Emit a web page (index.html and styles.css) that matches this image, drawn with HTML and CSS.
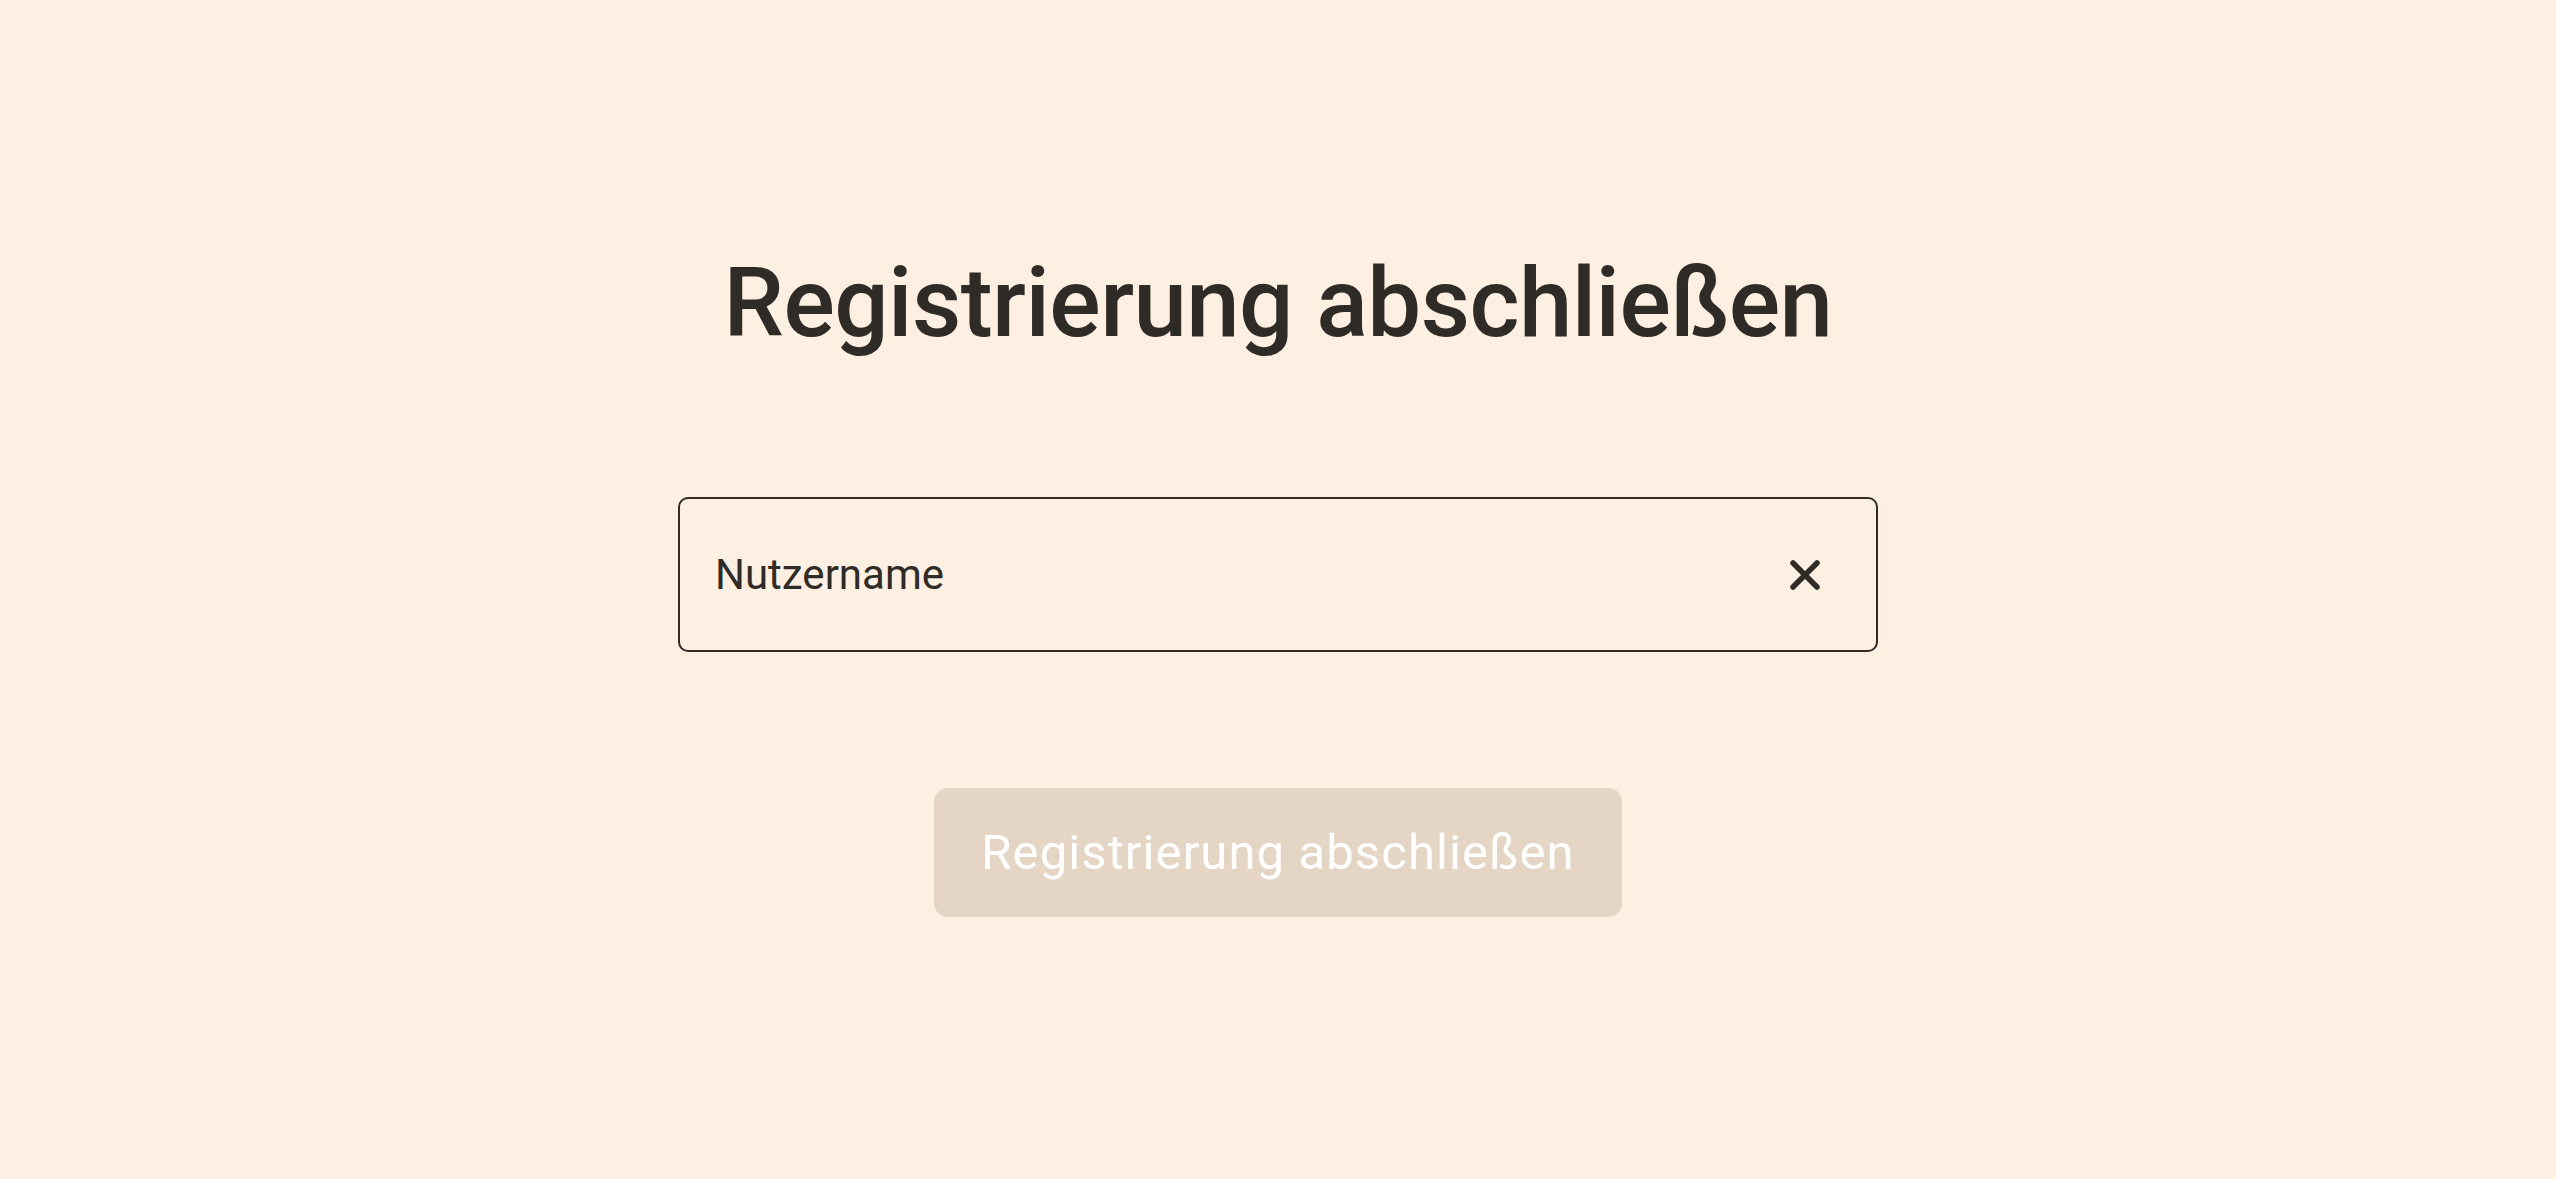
FILE: index.html
```html
<!DOCTYPE html>
<html lang="de">
<head>
<meta charset="utf-8">
<title>Registrierung abschließen</title>
<link rel="stylesheet" href="styles.css">
</head>
<body>
<main class="page">
  <h1 class="title">Registrierung abschließen</h1>
  <div class="field">
    <span class="field-value">Nutzername</span>
    <button class="clear" type="button" aria-label="Löschen">
      <svg width="30" height="30" viewBox="0 0 30 30"><path d="M3 3 L27 27 M27 3 L3 27" stroke="#2f2b26" stroke-width="5.5" stroke-linecap="round" fill="none"/></svg>
    </button>
  </div>
  <button class="submit" type="button" disabled>Registrierung abschließen</button>
</main>
</body>
</html>
```
FILE: styles.css
```css
html, body {
  margin: 0;
  padding: 0;
  background: #fdefe2;
  height: 100%;
}
body {
  font-family: Roboto, "Noto Sans", sans-serif;
  color: #2f2b26;
}
.page {
  display: flex;
  flex-direction: column;
  align-items: center;
  padding-top: 243px;
}
.title {
  margin: 0;
  font-size: 96px;
  line-height: 120px;
  font-weight: 500;
  letter-spacing: -0.6px;
}
.field {
  margin-top: 134px;
  box-sizing: border-box;
  width: 1200px;
  height: 155px;
  border: 2px solid #2f2b26;
  border-radius: 10px;
  display: flex;
  align-items: center;
  justify-content: space-between;
  padding: 0 56px 0 35px;
}
.field-value {
  font-size: 42px;
}
.clear {
  background: none;
  border: none;
  padding: 0;
  width: 30px;
  height: 30px;
  display: flex;
}
.submit {
  margin-top: 136px;
  width: 688px;
  height: 129px;
  border: none;
  border-radius: 14px;
  background: #e5d5c4;
  color: #ffffff;
  font-family: Roboto, "Noto Sans", sans-serif;
  font-size: 49px;
  letter-spacing: 1.1px;
  padding: 0;
}
```
